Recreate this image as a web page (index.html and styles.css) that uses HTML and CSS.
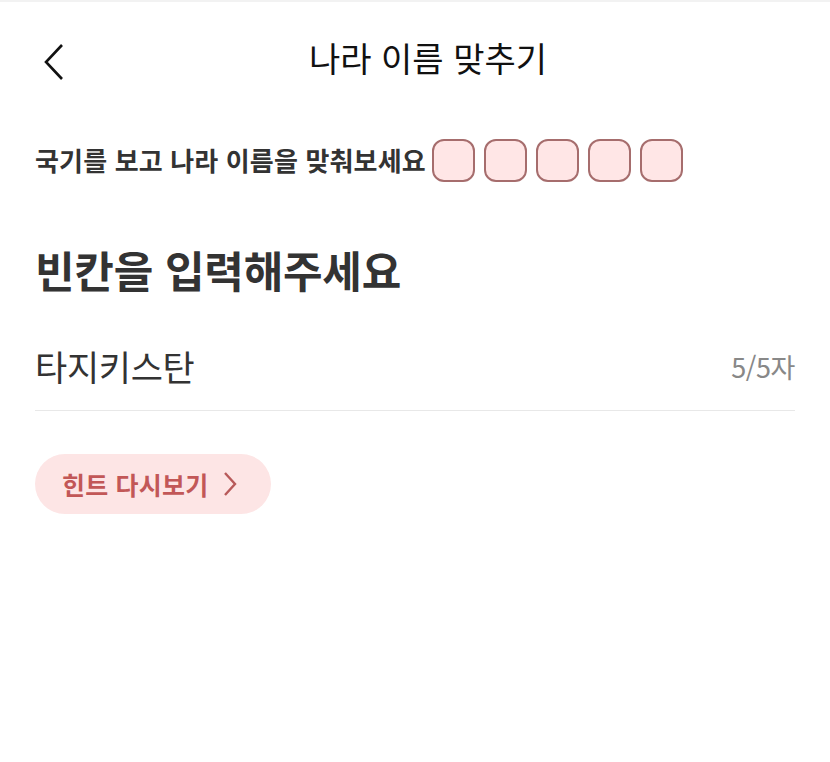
FILE: index.html
```html
<!DOCTYPE html>
<html lang="ko">
<head>
<meta charset="utf-8">
<link rel="stylesheet" href="styles.css">
</head>
<body>
<div class="page">
  <header class="topbar">
    <svg class="back" width="24" height="40" viewBox="0 0 24 40"><path d="M20 3 L4 20 L20 37" fill="none" stroke="#111" stroke-width="2.6"/></svg>
    <h1 class="title">나라 이름 맞추기</h1>
  </header>
  <div class="prompt">
    <span class="prompt-text">국기를 보고 나라 이름을 맞춰보세요</span>
    <div class="slots">
      <span class="slot"></span><span class="slot"></span><span class="slot"></span><span class="slot"></span><span class="slot"></span>
    </div>
  </div>
  <h2 class="heading">빈칸을 입력해주세요</h2>
  <div class="field">
    <span class="value">타지키스탄</span>
    <span class="count">5/5자</span>
  </div>
  <button class="hint">힌트 다시보기
    <svg width="16" height="26" viewBox="0 0 16 26"><path d="M3 2 L13 13 L3 24" fill="none" stroke="#b85a5a" stroke-width="2.4"/></svg>
  </button>
</div>
</body>
</html>
```
FILE: styles.css
```css
html, body { margin: 0; padding: 0; background: #fff; }
body { font-family: "Noto Sans CJK KR", "Noto Sans", sans-serif; color: #333; border-top: 2px solid #f2f2f2; }
.page { padding: 0 35px; }
.topbar { position: relative; height: 120px; display: flex; align-items: center; justify-content: center; margin-top: -2px; }
.back { position: absolute; left: 7px; top: 42px; }
.title { margin: -5px 0 0 26px; font-size: 34px; font-weight: 400; color: #111; letter-spacing: 0; }
.prompt { display: flex; align-items: center; gap: 6px; height: 42px; margin-top: 19px; }
.prompt-text { font-size: 26px; font-weight: 700; color: #333; letter-spacing: 0.15px; margin-top: -2px; }
.slots { display: flex; gap: 9px; }
.slot { width: 39px; height: 39px; border: 2px solid #a66d6d; border-radius: 12px; background: #ffe6e6; }
.heading { margin: 60px 0 0; font-size: 43px; font-weight: 700; color: #333; letter-spacing: -0.2px; line-height: 56px; }
.field { display: flex; justify-content: space-between; align-items: center; height: 82px; margin-top: 31px; border-bottom: 1.5px solid #e8e8e8; }
.value { font-size: 35px; color: #333; letter-spacing: -0.3px; margin-top: -8px; }
.count { font-size: 27px; color: #888; letter-spacing: -0.4px; margin-top: -6px; }
.hint { margin-top: 43px; height: 60px; border: none; border-radius: 30px; background: #fde5e5; color: #c25757; font-family: inherit; font-size: 25px; font-weight: 700; padding: 0 33px 0 27px; display: flex; align-items: center; gap: 14px; letter-spacing: 0.2px; }
```
